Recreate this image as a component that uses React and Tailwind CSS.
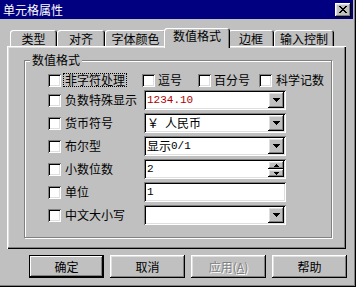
const raised = "shadow-[inset_-1px_-1px_#000,inset_1px_1px_#fff,inset_-2px_-2px_#808080,inset_2px_2px_#dfdfdf]";
const sunken = "shadow-[inset_1px_1px_#808080,inset_-1px_-1px_#fff,inset_2px_2px_#000,inset_-2px_-2px_#dfdfdf]";

function Check({ className = "" }) {
  return <span className={"block w-[13px] h-[13px] bg-white shrink-0 " + sunken + " " + className} />;
}

function DropBtn() {
  return (
    <div className={"w-[16px] h-[16px] bg-[#c0c0c0] shrink-0 flex items-center justify-center " + raised}>
      <svg width="7" height="4" viewBox="0 0 7 4" shapeRendering="crispEdges">
        <path d="M0 0h7v1H0zM1 1h5v1H1zM2 2h3v1H2zM3 3h1v1H3z" fill="#000" />
      </svg>
    </div>
  );
}

function Combo({ children }) {
  return (
    <div className={"w-[142px] h-[20px] bg-white flex items-center pl-[3px] pr-[2px] " + sunken}>
      <div className="flex-1 flex items-center">{children}</div>
      <DropBtn />
    </div>
  );
}

function Row({ label, children }) {
  return (
    <div className="flex items-center h-[20px] mt-[3px]">
      <div className="w-[96px] flex items-center">
        <Check />
        <span className="ml-[4px] leading-[12px]">{label}</span>
      </div>
      {children}
    </div>
  );
}

const mono = "font-['Liberation_Mono',monospace] text-[11px] leading-[12px]";

export default function App() {
  return (
    <div className="w-[356px] h-[287px] bg-[#c0c0c0] overflow-hidden text-[12px] leading-[12px] text-black font-['Noto_Sans_CJK_SC',sans-serif] shadow-[inset_-1px_-1px_#000,inset_-2px_-2px_#808080]">
      {/* title bar */}
      <div className="h-[19px] mr-[3px] bg-[#000080] flex items-center justify-between pl-[3px] pr-[2px]">
        <span className="text-white text-[12px] leading-[12px]">单元格属性</span>
        <div className={"w-[16px] h-[14px] bg-[#c0c0c0] flex items-center justify-center " + raised}>
          <svg width="8" height="7" viewBox="0 0 8 7" shapeRendering="crispEdges">
            <path d="M0 0h2v1H0zM6 0h2v1H6zM1 1h2v1H1zM5 1h2v1H5zM2 2h4v1H2zM3 3h2v1H3zM2 4h4v1H2zM1 5h2v1H1zM5 5h2v1H5zM0 6h2v1H0zM6 6h2v1H6z" fill="#000" />
          </svg>
        </div>
      </div>

      <div className="pl-[7px] pt-[9px]">
        {/* tabs */}
        <div className="flex items-end h-[18px] ml-[3px] relative z-10">
          <div className="w-[47px] h-[16px] flex justify-center pt-[3px] bg-[#c0c0c0] rounded-t-[3px] shadow-[inset_1px_1px_#fff,inset_-1px_0_#000,inset_-2px_0_#808080]">类型</div>
          <div className="w-[48px] h-[16px] flex justify-center pt-[3px] bg-[#c0c0c0] rounded-t-[3px] shadow-[inset_1px_1px_#fff,inset_-1px_0_#000,inset_-2px_0_#808080]">对齐</div>
          <div className="w-[61px] h-[16px] flex justify-center pt-[3px] bg-[#c0c0c0] rounded-t-[3px] shadow-[inset_1px_1px_#fff,inset_-1px_0_#000,inset_-2px_0_#808080]">字体颜色</div>
          <div className="w-[66px] -mx-[2px] h-[20px] -mb-[2px] relative z-10 flex justify-center pt-[2px] bg-[#c0c0c0] rounded-t-[3px] shadow-[inset_1px_1px_#fff,inset_-1px_0_#000,inset_-2px_0_#808080]">数值格式</div>
          <div className="w-[46px] h-[16px] flex justify-center pt-[3px] bg-[#c0c0c0] rounded-t-[3px] shadow-[inset_1px_1px_#fff,inset_-1px_0_#000,inset_-2px_0_#808080]">边框</div>
          <div className="w-[60px] h-[16px] flex justify-center pt-[3px] bg-[#c0c0c0] rounded-t-[3px] shadow-[inset_1px_1px_#fff,inset_-1px_0_#000,inset_-2px_0_#808080]">输入控制</div>
        </div>

        {/* panel */}
        <div className="w-[339px] h-[203px] bg-[#c0c0c0] pt-[14px] pl-[17px] shadow-[inset_1px_1px_#fff,inset_-1px_-1px_#000,inset_-2px_-2px_#808080,inset_2px_2px_#dfdfdf]">
          <div className="relative w-[308px] h-[178px] border border-[#808080] shadow-[inset_1px_1px_#fff,1px_1px_#fff] pl-[23px] pt-[12px]">
            <span className="absolute -top-[7px] left-[5px] px-[2px] bg-[#c0c0c0] leading-[12px]">数值格式</span>

            <div className="flex items-center h-[14px]">
              <Check />
              <span className="ml-[2px] border border-dotted border-black px-[1px] leading-[12px]">非字符处理</span>
              <Check className="ml-[15px]" />
              <span className="ml-[3px]">逗号</span>
              <Check className="ml-[16px]" />
              <span className="ml-[3px]">百分号</span>
              <Check className="ml-[9px]" />
              <span className="ml-[4px]">科学记数</span>
            </div>

            <div className="mt-[3px]">
              <Row label="负数特殊显示">
                <Combo><span className={mono + " text-[#b00000]"}>1234.10</span></Combo>
              </Row>
              <Row label="货币符号">
                <Combo><span>￥</span><span className="ml-[6px]">人民币</span></Combo>
              </Row>
              <Row label="布尔型">
                <Combo><span>显示</span><span className={mono}>0/1</span></Combo>
              </Row>
              <Row label="小数位数">
                <div className={"w-[142px] h-[20px] bg-white flex items-center pl-[3px] pr-[2px] " + sunken}>
                  <span className={"flex-1 " + mono}>2</span>
                  <div className="flex flex-col">
                    <div className={"w-[16px] h-[8px] bg-[#c0c0c0] flex items-center justify-center " + raised}>
                      <svg width="5" height="3" viewBox="0 0 5 3" shapeRendering="crispEdges"><path d="M2 0h1v1H2zM1 1h3v1H1zM0 2h5v1H0z" fill="#000" /></svg>
                    </div>
                    <div className={"w-[16px] h-[8px] bg-[#c0c0c0] flex items-center justify-center " + raised}>
                      <svg width="5" height="3" viewBox="0 0 5 3" shapeRendering="crispEdges"><path d="M0 0h5v1H0zM1 1h3v1H1zM2 2h1v1H2z" fill="#000" /></svg>
                    </div>
                  </div>
                </div>
              </Row>
              <Row label="单位">
                <div className={"w-[142px] h-[20px] bg-white flex items-center pl-[3px] " + sunken}>
                  <span className={mono}>1</span>
                </div>
              </Row>
              <Row label="中文大小写">
                <Combo />
              </Row>
            </div>
          </div>
        </div>

        {/* buttons */}
        <div className="flex gap-[6px] ml-[22px] mt-[6px]">
          <div className="w-[75px] h-[23px] border border-black bg-[#c0c0c0] flex items-center justify-center shadow-[inset_-1px_-1px_#000,inset_1px_1px_#fff,inset_-2px_-2px_#808080]">确定</div>
          <div className={"w-[75px] h-[23px] bg-[#c0c0c0] flex items-center justify-center " + raised}>取消</div>
          <div className={"w-[75px] h-[23px] bg-[#c0c0c0] flex items-center justify-center text-[#808080] [text-shadow:1px_1px_#fff] " + raised}>
            应用(<span className="underline">A</span>)
          </div>
          <div className={"w-[75px] h-[23px] bg-[#c0c0c0] flex items-center justify-center " + raised}>帮助</div>
        </div>
      </div>
    </div>
  );
}
